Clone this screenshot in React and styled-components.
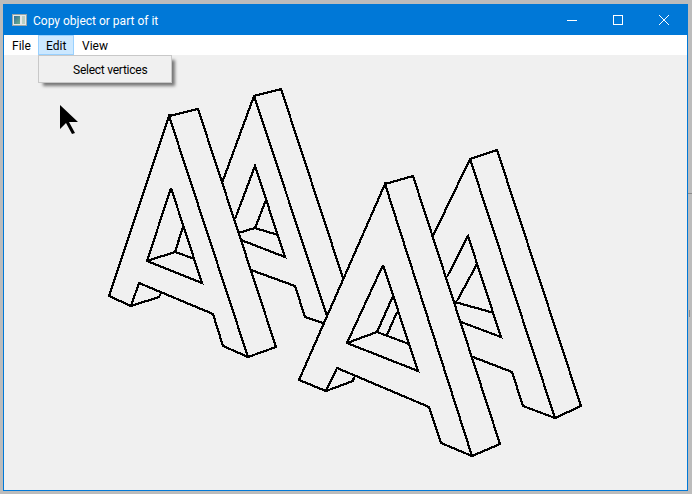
import React from 'react';
import styled, { createGlobalStyle } from 'styled-components';

const GlobalStyle = createGlobalStyle`
html, body { margin: 0; padding: 0; background: #bcbcbc; }
body { width: 692px; height: 494px; overflow: hidden; font-family: Roboto, "Open Sans", sans-serif; }
`;

const Desktop = styled.div`
width: 692px;
height: 494px;
padding: 4px 4px 3px 3px;
box-sizing: border-box;
background: #bcbcbc;
position: relative;
`;

const EdgeMark = styled.div`
position: absolute;
left: ${p => p.$x}px;
top: ${p => p.$y}px;
width: ${p => p.$w}px;
height: ${p => p.$h}px;
background: #8a8a8a;
`;

const Win = styled.div`
height: 100%;
display: flex;
flex-direction: column;
border: 1px solid #0078d7;
border-top: 0;
box-sizing: border-box;
background: #f0f0f0;
position: relative;
`;

const TitleBar = styled.div`
height: 31px;
background: #0078d7;
display: flex;
align-items: center;
color: #fff;
font-size: 12px;
padding-left: 8px;
flex: none;
`;

const AppIcon = styled.svg`
width: 15px;
height: 12px;
margin-right: 6px;
`;

const Title = styled.span`
flex: 1;
padding-top: 2px;
`;

const WinButton = styled.div`
width: 46px;
height: 31px;
display: flex;
align-items: center;
justify-content: center;
`;

const MenuBar = styled.div`
height: 20px;
background: #fff;
display: flex;
flex: none;
padding-left: 1px;
`;

const MenuItem = styled.div`
width: ${p => p.$w}px;
padding-left: ${p => p.$pad}px;
font-size: 12px;
line-height: 22px;
color: #000;
box-sizing: border-box;
background: ${p => (p.$active ? '#cce8ff' : 'transparent')};
box-shadow: ${p => (p.$active ? 'inset 0 0 0 1px #99d1ff' : 'none')};
`;

const Client = styled.div`
flex: 1;
min-height: 0;
`;

const Canvas = styled.svg`
display: block;
`;

const Dropdown = styled.div`
position: absolute;
left: 34px;
top: 51px;
width: 134px;
height: 28px;
box-sizing: border-box;
background: #f0f0f0;
border: 1px solid #c8c8c8;
box-shadow: 4px 4px 3px -1px rgba(0, 0, 0, 0.5);
font-size: 12px;
letter-spacing: -0.25px;
line-height: 28px;
padding-left: 34px;
color: #000;
`;

const lines = [
  // back left A
  'M169 116L198 109L276 347L248 357L223 346L213 314L139 283L131 306L109 296L169 116L248 357',
  'M131 306L159 297L161 293',
  'M171 188L147 261L202 283L171 188',
  'M147 261L175 252L195 259',
  'M175 252L183 227',
  // back right A
  'M222 183L254 96L281 89L343 278',
  'M254 96L327 316',
  'M235 219L255 166L285 257L241 240',
  'M238 233L255 228L278 235',
  'M255 228L266 200',
  'M251 270L295 286L305 317L323 323',
  // front left A
  'M385 184L413 176L500 444L472 456L441 443L429 407L337 368L326 391L299 380L385 184L472 456',
  'M326 391L353 381L354 377',
  'M383 265L347 343L418 371L383 265',
  'M347 343L377 332L409 344',
  'M377 332L393 296',
  'M397 312L387 335',
  // front right A
  'M433 236L470 159L497 150L581 406L555 418L523 406L512 372L473 357',
  'M470 159L555 418',
  'M447 277L468 236L501 337L461 322',
  'M455 302L494 313',
  'M457 301L477 264',
];

const App = () => (
  <>
    <GlobalStyle />
    <Desktop>
      <Win>
        <TitleBar>
          <AppIcon viewBox="0 0 15 12">
            <defs>
              <linearGradient id="iconFill" x1="0" y1="0" x2="1" y2="1">
                <stop offset="0" stopColor="#2f6f9f" />
                <stop offset="1" stopColor="#6fb08a" />
              </linearGradient>
            </defs>
            <rect x="0.5" y="0.5" width="14" height="11" fill="#e4e8e8" stroke="#9aa6a6" />
            <rect x="2" y="2" width="6" height="8" fill="url(#iconFill)" />
            <rect x="10" y="2" width="3" height="8" fill="#b9cfc4" />
          </AppIcon>
          <Title>Copy object or part of it</Title>
          <WinButton>
            <svg width="10" height="10" viewBox="0 0 10 10"><path d="M0 5.5H10" stroke="#fff" /></svg>
          </WinButton>
          <WinButton>
            <svg width="10" height="10" viewBox="0 0 10 10"><rect x="0.5" y="0.5" width="9" height="9" fill="none" stroke="#fff" /></svg>
          </WinButton>
          <WinButton>
            <svg width="10" height="10" viewBox="0 0 10 10"><path d="M0 0L10 10M10 0L0 10" stroke="#fff" /></svg>
          </WinButton>
        </TitleBar>
        <MenuBar>
          <MenuItem $w={33} $pad={7}>File</MenuItem>
          <MenuItem $w={36} $pad={8} $active>Edit</MenuItem>
          <MenuItem $w={40} $pad={8}>View</MenuItem>
        </MenuBar>
        <Client>
          <Canvas width="683" height="435" viewBox="4 55 683 435">
            <path d="M60 105L60 129L66 123L72 134L75 133L69 122L78 122Z" fill="#000" />
            {lines.map(d => (
              <path key={d} d={d} fill="none" stroke="#000" strokeWidth="2.2" strokeLinejoin="miter" shapeRendering="crispEdges" />
            ))}
          </Canvas>
        </Client>
        <Dropdown>Select vertices</Dropdown>
      </Win>
      <EdgeMark $x={688} $y={193} $w={4} $h={1} />
      <EdgeMark $x={689} $y={310} $w={1} $h={7} />
    </Desktop>
  </>
);

export default App;
